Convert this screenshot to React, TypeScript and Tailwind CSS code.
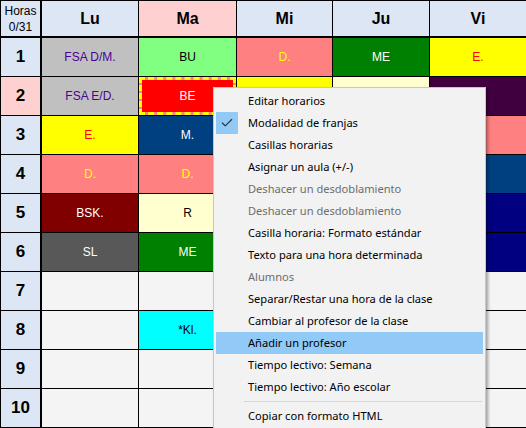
import { Check } from "lucide-react";

type Cell = { text?: string; bg: string; fg?: string; selected?: boolean };

const days = ["Lu", "Ma", "Mi", "Ju", "Vi"];

const E = "#f4f4f4";

// rows of the timetable, one entry per day
const rows: Cell[][] = [
  [
    { text: "FSA D/M.", bg: "#c0c0c0", fg: "#4b0096" },
    { text: "BU", bg: "#80ff80", fg: "#000000" },
    { text: "D.", bg: "#ff8080", fg: "#ffff00" },
    { text: "ME", bg: "#008000", fg: "#ffffff" },
    { text: "E.", bg: "#ffff00", fg: "#ff0000" },
  ],
  [
    { text: "FSA E/D.", bg: "#c0c0c0", fg: "#4b0096" },
    { text: "BE", bg: "#ff0000", fg: "#ffffff", selected: true },
    { bg: "#ffff00" },
    { bg: "#ffffd0" },
    { bg: "#400040" },
  ],
  [
    { text: "E.", bg: "#ffff00", fg: "#ff0000" },
    { text: "M.", bg: "#004080", fg: "#ffffff" },
    { bg: "#ff8080" },
    { bg: "#ffff00" },
    { bg: "#ff8080" },
  ],
  [
    { text: "D.", bg: "#ff8080", fg: "#ffff00" },
    { text: "D.", bg: "#ff8080", fg: "#ffff00" },
    { bg: "#008000" },
    { bg: "#c0c0c0" },
    { bg: "#004080" },
  ],
  [
    { text: "BSK.", bg: "#800000", fg: "#ffffff" },
    { text: "R", bg: "#ffffd0", fg: "#000000" },
    { bg: "#80ff80" },
    { bg: "#ffff00" },
    { bg: "#000080" },
  ],
  [
    { text: "SL", bg: "#585858", fg: "#ffffff" },
    { text: "ME", bg: "#008000", fg: "#ffffff" },
    { bg: "#ff8080" },
    { bg: "#004080" },
    { bg: "#000080" },
  ],
  [{ bg: E }, { bg: E }, { bg: E }, { bg: E }, { bg: E }],
  [{ bg: E }, { text: "*Kl.", bg: "#00ffff", fg: "#000000" }, { bg: E }, { bg: E }, { bg: E }],
  [{ bg: E }, { bg: E }, { bg: E }, { bg: E }, { bg: E }],
  [{ bg: E }, { bg: E }, { bg: E }, { bg: E }, { bg: E }],
];

type Item = { label: string; disabled?: boolean; checked?: boolean; active?: boolean; sep?: boolean };

const menu: Item[] = [
  { label: "Editar horarios" },
  { label: "Modalidad de franjas", checked: true },
  { label: "Casillas horarias" },
  { label: "Asignar un aula (+/-)" },
  { label: "Deshacer un desdoblamiento", disabled: true },
  { label: "Deshacer un desdoblamiento", disabled: true },
  { label: "Casilla horaria: Formato estándar" },
  { label: "Texto para una hora determinada" },
  { label: "Alumnos", disabled: true },
  { label: "Separar/Restar una hora de la clase" },
  { label: "Cambiar al profesor de la clase" },
  { label: "Añadir un profesor", active: true },
  { label: "Tiempo lectivo: Semana" },
  { label: "Tiempo lectivo: Año escolar" },
  { label: "", sep: true },
  { label: "Copiar con formato HTML" },
];

const TimetableCell = ({ cell }: { cell: Cell }) => {
  if (cell.selected) {
    return (
      <div className="bg-[#ff8080]">
        <div
          className="h-full flex items-center justify-center border-[3px] border-dashed border-[#ffff00] bg-clip-padding text-[12px]"
          style={{ backgroundColor: cell.bg, color: cell.fg }}
        >
          {cell.text}
        </div>
      </div>
    );
  }
  return (
    <div
      className="flex items-center justify-center text-[12px]"
      style={{ backgroundColor: cell.bg, color: cell.fg }}
    >
      {cell.text}
    </div>
  );
};

const ContextMenu = () => (
  <div className="absolute left-[213px] top-[87px] w-[273px] bg-[#f2f2f2] border border-[#c8c8c8] px-[2px] pt-[2px] pb-[3px] shadow-[2px_2px_3px_rgba(0,0,0,0.35)] font-['Noto_Sans',sans-serif] text-[11.1px] text-black">
    {menu.map((item, i) =>
      item.sep ? (
        <div key={i} className="h-[7px] flex items-center pl-[28px] pr-[1px]">
          <div className="h-px w-full bg-[#d7d7d7]" />
        </div>
      ) : (
        <div
          key={i}
          className={`h-[22px] flex items-center ${item.active ? "bg-[#91c9f7]" : ""}`}
        >
          <div className="w-[22px] h-[22px] flex items-center justify-center">
            {item.checked && (
              <div className="w-[22px] h-[22px] bg-[#91c9f7] flex items-center justify-center">
                <Check size={14} strokeWidth={2} className="text-[#333]" />
              </div>
            )}
          </div>
          <span className={`pl-[10px] whitespace-nowrap ${item.disabled ? "text-[#6d6d6d]" : ""}`}>
            {item.label}
          </span>
        </div>
      )
    )}
  </div>
);

export default function App() {
  return (
    <div className="relative w-[526px] h-[428px] overflow-hidden bg-black pt-px pl-px font-['Liberation_Sans',Arial,sans-serif]">
      <div className="grid grid-cols-[40px_96px_97px_95px_96px_96px] grid-rows-[36px_repeat(10,38px)] gap-px">
        <div className="mr-px mb-px bg-[#dce6f4] flex flex-col items-center justify-center text-[12px] leading-[16px] text-black">
          <span>Horas</span>
          <span>0/31</span>
        </div>
        {days.map((d) => (
          <div
            key={d}
            className={`mb-px flex items-center justify-center text-[16px] font-bold text-black ${
              d === "Ma" ? "bg-[#ffd0d0]" : "bg-[#dce6f4]"
            }`}
          >
            {d}
          </div>
        ))}
        {rows.map((row, r) => (
          <div key={r} className="contents">
            <div
              className={`mr-px flex items-center justify-center text-[17px] font-bold text-black ${
                r === 1 ? "bg-[#ffd0d0]" : "bg-[#dce6f4]"
              }`}
            >
              {r + 1}
            </div>
            {row.map((cell, c) => (
              <TimetableCell key={c} cell={cell} />
            ))}
          </div>
        ))}
      </div>
      <ContextMenu />
    </div>
  );
}
